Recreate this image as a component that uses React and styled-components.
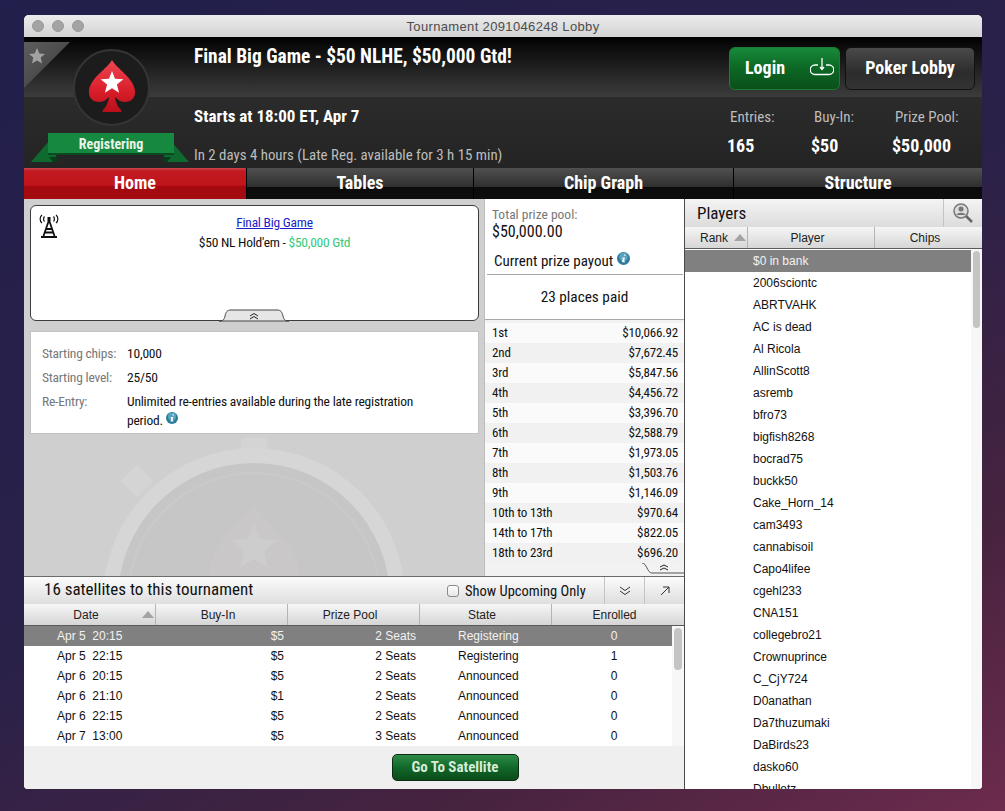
import React from 'react';
import styled, { createGlobalStyle } from 'styled-components';

const narrow = `"Liberation Sans Narrow", "Roboto Condensed", "DejaVu Sans Condensed", "Liberation Sans", sans-serif`;
const sans = `"Liberation Sans", Arial, sans-serif`;

const payouts = [
  ['1st', '$10,066.92'], ['2nd', '$7,672.45'], ['3rd', '$5,847.56'], ['4th', '$4,456.72'],
  ['5th', '$3,396.70'], ['6th', '$2,588.79'], ['7th', '$1,973.05'], ['8th', '$1,503.76'],
  ['9th', '$1,146.09'], ['10th to 13th', '$970.64'], ['14th to 17th', '$822.05'], ['18th to 23rd', '$696.20'],
];

const satellites = [
  ['Apr 5  20:15', '$5', '2 Seats', 'Registering', '0'],
  ['Apr 5  22:15', '$5', '2 Seats', 'Registering', '1'],
  ['Apr 6  20:15', '$5', '2 Seats', 'Announced', '0'],
  ['Apr 6  21:10', '$1', '2 Seats', 'Announced', '0'],
  ['Apr 6  22:15', '$5', '2 Seats', 'Announced', '0'],
  ['Apr 7  13:00', '$5', '3 Seats', 'Announced', '0'],
];

const players = ['$0 in bank', '2006sciontc', 'ABRTVAHK', 'AC is dead', 'Al Ricola', 'AllinScott8', 'asremb', 'bfro73',
  'bigfish8268', 'bocrad75', 'buckk50', 'Cake_Horn_14', 'cam3493', 'cannabisoil', 'Capo4lifee', 'cgehl233', 'CNA151',
  'collegebro21', 'Crownuprince', 'C_CjY724', 'D0anathan', 'Da7thuzumaki', 'DaBirds23', 'dasko60', 'Dbulletz'];

const GlobalStyle = createGlobalStyle`
  html, body { margin: 0; padding: 0; height: 100%; }
  body {
    height: 811px;
    overflow: hidden;
    background: linear-gradient(152deg, #221f4c 0%, #2a2149 50%, #46233f 78%, #6d2b4d 100%);
    font-family: ${sans};
  }
  * { box-sizing: border-box; }
`;

const Desktop = styled.div`
  padding: 15px 23px 22px 24px;
  height: 811px;
`;

const Window = styled.div`
  width: 958px;
  height: 774px;
  border-radius: 5px 5px 4px 4px;
  overflow: hidden;
  display: flex;
  flex-direction: column;
  background: #fff;
`;

const TitleBar = styled.div`
  height: 22px;
  flex: none;
  position: relative;
  display: flex;
  align-items: center;
  justify-content: center;
  background: linear-gradient(#ececec, #d3d3d3);
  color: #4c4c4c;
  font-size: 13px;
  letter-spacing: 0.35px;
`;

const Lights = styled.div`
  position: absolute;
  left: 8px;
  top: 5px;
  display: flex;
  gap: 8px;
`;

const Light = styled.span`
  width: 12px;
  height: 12px;
  border-radius: 50%;
  background: #a3a3a3;
  border: 1px solid #999;
`;

const Header = styled.div`
  height: 131px;
  flex: none;
  display: flex;
  color: #fff;
  font-family: ${narrow};
  background: linear-gradient(#000 0, #0a0a0a 8px, #3c3c3c 60px, #2b2b2b 60px, #242424 131px);
`;

const LogoCol = styled.div`
  width: 170px;
  flex: none;
  position: relative;
`;

const Corner = styled.div`
  position: absolute;
  left: 0;
  top: 5px;
  width: 46px;
  height: 46px;
  background: linear-gradient(135deg, #5d5d5d, #3a3a3a);
  clip-path: polygon(0 0, 100% 0, 0 100%);
`;

const CornerStar = styled.svg`
  position: absolute;
  left: 3px;
  top: 9px;
`;

const LogoRing = styled.div`
  position: absolute;
  left: 49px;
  top: 12px;
  width: 77px;
  height: 77px;
  border-radius: 50%;
  background: #1c1c1c;
  border: 2px solid #353535;
  display: flex;
  align-items: center;
  justify-content: center;
  padding-bottom: 3px;
`;

const Ribbon = styled.svg`
  position: absolute;
  left: 7px;
  top: 94px;
`;

const RibbonLabel = styled.div`
  position: absolute;
  left: 24px;
  top: 96px;
  width: 126px;
  text-align: center;
  color: #e8f5e8;
  font-size: 14px;
  font-weight: 700;
  line-height: 22px;
`;

const InfoCol = styled.div`
  flex: 1;
  display: flex;
  flex-direction: column;
`;

const TopRow = styled.div`
  height: 60px;
  display: flex;
  justify-content: space-between;
  padding: 10px 7px 0 0;
`;

const Title = styled.div`
  font-size: 19.4px;
  font-weight: 700;
  line-height: 20px;
`;

const Buttons = styled.div`
  display: flex;
  gap: 5px;
`;

const LoginButton = styled.div`
  width: 111px;
  height: 43px;
  border-radius: 6px;
  border: 1px solid #1b7a33;
  background: linear-gradient(#188a3a, #0c6a25 45%, #0a4f1a);
  display: flex;
  align-items: center;
  justify-content: space-between;
  padding: 0 5px 3px 15px;
  font-size: 18px;
  font-weight: 700;
`;

const LobbyButton = styled.div`
  width: 130px;
  height: 43px;
  border-radius: 6px;
  border: 1px solid #111;
  background: linear-gradient(#4a4a4a, #2c2c2c 60%, #333);
  display: flex;
  align-items: center;
  justify-content: center;
  padding-bottom: 3px;
  font-size: 18px;
  font-weight: 700;
`;

const BottomRow = styled.div`
  flex: 1;
  display: flex;
  justify-content: space-between;
`;

const Starts = styled.div`
  display: flex;
  flex-direction: column;
`;

const StartsAt = styled.div`
  font-size: 17px;
  font-weight: 700;
  line-height: 20px;
  margin-top: 9px;
`;

const Countdown = styled.div`
  font-size: 14.9px;
  line-height: 18px;
  margin-top: 20px;
  color: #bdbdbd;
`;

const Stats = styled.div`
  display: flex;
  padding-right: 25px;
`;

const Stat = styled.div`
  width: ${(p) => p.$w}px;
  display: flex;
  flex-direction: column;
  white-space: nowrap;
`;

const StatLabel = styled.div`
  font-size: 15px;
  line-height: 18px;
  margin-top: 11px;
  color: #bdbdbd;
`;

const StatValue = styled.div`
  font-size: 18px;
  font-weight: 700;
  line-height: 22px;
  margin-top: 9px;
  margin-left: -3px;
`;

const Tabs = styled.div`
  height: 31px;
  flex: none;
  display: flex;
`;

const Tab = styled.div`
  width: ${(p) => p.$w}px;
  color: #fff;
  font-family: ${narrow};
  font-size: 18px;
  font-weight: 700;
  text-align: center;
  line-height: 30px;
  border-left: ${(p) => (p.$first ? 'none' : '1px solid #000')};
  background: ${(p) =>
    p.$active
      ? 'linear-gradient(#c9474c 0, #c11a20 3px, #c1141b 55%, #a30a10 60%, #a50c12)'
      : 'linear-gradient(#505050, #2f2f2f 60%, #0b0b0b 60%, #0d0d0d)'};
`;

const Main = styled.div`
  flex: 1;
  min-height: 0;
  display: flex;
`;

const LeftSide = styled.div`
  width: 661px;
  flex: none;
  display: flex;
  flex-direction: column;
  border-right: 1px solid #4a4a4a;
`;

const Upper = styled.div`
  height: 377px;
  flex: none;
  display: flex;
`;

const HomePane = styled.div`
  width: 461px;
  flex: none;
  position: relative;
  overflow: hidden;
  padding: 6px 5px 6px 6px;
  display: flex;
  flex-direction: column;
  gap: 10px;
  background: #cfcfcf;
  border-right: 1px solid #bdbdbd;
`;

const Watermark = styled.svg`
  position: absolute;
  left: 0;
  top: 230px;
`;

const NewsCard = styled.div`
  height: 116px;
  flex: none;
  position: relative;
  border: 1px solid #3c3c3c;
  border-radius: 6px;
  background: #fff;
  padding: 7px 0 0 40px;
  text-align: center;
  font-family: ${narrow};
  font-size: 13.5px;
  letter-spacing: -0.25px;
  line-height: 19px;
  color: #111;
`;

const Tower = styled.svg`
  position: absolute;
  left: 8px;
  top: 8px;
`;

const NewsLink = styled.a`
  color: #1a1fc8;
  text-decoration: underline;
  display: block;
  margin-bottom: 1px;
`;

const Green = styled.span`
  color: #35c977;
`;

const CollapseTab = styled.svg`
  position: absolute;
  left: 188px;
  bottom: -2px;
`;

const InfoBox = styled.div`
  position: relative;
  height: 103px;
  flex: none;
  background: #fff;
  border: 1px solid #c2c2c2;
  padding: 12px 11px 0;
  display: grid;
  grid-template-columns: 85px 1fr;
  grid-auto-rows: min-content;
  row-gap: 5px;
  font-family: ${narrow};
  font-size: 13.5px;
  letter-spacing: -0.2px;
  line-height: 19px;
  color: #111;
`;

const InfoLabel = styled.div`
  color: #777;
`;

const InfoValue = styled.div`
  max-width: 310px;
`;

const InfoDot = styled.svg`
  vertical-align: 1px;
`;

const PrizePane = styled.div`
  flex: 1;
  position: relative;
  background: #fff;
  display: flex;
  flex-direction: column;
  font-family: ${narrow};
  color: #111;
`;

const PoolLabel = styled.div`
  font-size: 13.5px;
  line-height: 16px;
  color: #777;
  padding: 7px 0 0 7px;
`;

const PoolValue = styled.div`
  font-size: 16px;
  line-height: 20px;
  padding-left: 7px;
`;

const PayoutTitle = styled.div`
  font-size: 15px;
  line-height: 20px;
  height: 24px;
  margin: 9px 1px 0 2px;
  padding: 0 0 0 7px;
  border-bottom: 1px solid #a8a8a8;
`;

const Places = styled.div`
  height: 45px;
  flex: none;
  text-align: center;
  font-size: 15.3px;
  line-height: 44px;
  border-bottom: 1px solid #a8a8a8;
`;

const PayoutList = styled.div`
  flex: 1;
  padding-top: 3px;
  background: #f2f2f2;
`;

const PayoutRow = styled.div`
  height: 20px;
  display: flex;
  justify-content: space-between;
  padding: 0 6px 0 7px;
  font-size: 13px;
  letter-spacing: -0.15px;
  line-height: 20px;
  background: ${(p) => (p.$odd ? '#fafafa' : '#f1f1f1')};
`;

const PayoutHandle = styled.svg`
  position: absolute;
  right: 0;
  bottom: 2px;
`;

const Satellites = styled.div`
  flex: 1;
  min-height: 0;
  display: flex;
  flex-direction: column;
  border-top: 1px solid #6b6b6b;
`;

const SatBar = styled.div`
  height: 27px;
  flex: none;
  display: flex;
  align-items: center;
  background: linear-gradient(#fbfbfb, #dedede);
  font-family: ${narrow};
  color: #111;
`;

const SatTitle = styled.div`
  flex: 1;
  font-size: 17px;
  padding: 0 0 3px 20px;
`;

const UpcomingBox = styled.span`
  width: 12px;
  height: 12px;
  margin-right: 6px;
  border: 1px solid #8a8a8a;
  border-radius: 3px;
  background: linear-gradient(#fff, #e6e6e6);
`;

const UpcomingLabel = styled.div`
  font-size: 14.5px;
  width: 139px;
  padding-top: 2px;
  white-space: nowrap;
`;

const BarButton = styled.div`
  width: 40px;
  height: 27px;
  display: flex;
  align-items: center;
  justify-content: center;
  border-left: 1px solid #c4c4c4;
`;

const HeadRow = styled.div`
  height: ${(p) => p.$h}px;
  flex: none;
  display: grid;
  grid-template-columns: ${(p) => p.$cols};
  background: linear-gradient(#f6f6f6, #d6d6d6);
  border-bottom: 1px solid #5a5a5a;
`;

const HeadCell = styled.div`
  position: relative;
  font-size: 12px;
  color: #222;
  display: flex;
  align-items: center;
  justify-content: ${(p) => p.$align || 'center'};
  padding: 0 ${(p) => (p.$pad ? 0 : 7)}px 0 ${(p) => p.$pad || 0}px;
  border-right: ${(p) => (p.$last ? 'none' : '1px solid #b4b4b4')};
`;

const SortArrow = styled.span`
  position: absolute;
  right: 1px;
  top: 7px;
  width: 0;
  height: 0;
  border-left: 6px solid transparent;
  border-right: 6px solid transparent;
  border-bottom: 7px solid #a4a4a4;
`;

const SatBody = styled.div`
  height: 120px;
  flex: none;
  position: relative;
  overflow: hidden;
  background: #fff;
`;

const SatRow = styled.div`
  height: 20px;
  width: 648px;
  display: grid;
  grid-template-columns: 33px 120px 107px 132px 42px 98px 116px;
  align-items: center;
  font-size: 12px;
  color: ${(p) => (p.$sel ? '#f2f2f2' : '#111')};
  background: ${(p) => (p.$sel ? '#808080' : '#fff')};
`;

const Cell = styled.span`
  text-align: ${(p) => p.$a || 'left'};
  white-space: pre;
`;

const Track = styled.div`
  position: absolute;
  right: 0;
  top: 0;
  bottom: 0;
  width: ${(p) => p.$w}px;
  background: #f7f7f7;
`;

const Thumb = styled.div`
  position: absolute;
  left: 2px;
  right: 2px;
  top: 2px;
  height: ${(p) => p.$h}px;
  border-radius: 4px;
  background: #c4c4c4;
`;

const SatFooter = styled.div`
  flex: 1;
  display: flex;
  justify-content: center;
  align-items: center;
  padding-left: 202px;
  background: #efefef;
`;

const SatButton = styled.div`
  width: 127px;
  height: 27px;
  border-radius: 5px;
  border: 1px solid #0d2a14;
  background: linear-gradient(#2c8c47, #12692a 48%, #0a4c1a);
  color: #d8ecd8;
  font-family: ${narrow};
  font-size: 15px;
  font-weight: 700;
  text-align: center;
  line-height: 24px;
`;

const PlayersPane = styled.div`
  flex: 1;
  min-width: 0;
  display: flex;
  flex-direction: column;
  background: #fff;
`;

const PlayersBar = styled.div`
  height: 28px;
  flex: none;
  display: flex;
  align-items: center;
  justify-content: space-between;
  background: linear-gradient(#f4f4f4, #dcdcdc);
  font-family: ${narrow};
  font-size: 17px;
  color: #111;
  padding-left: 12px;
`;

const SearchButton = styled.div`
  width: 39px;
  height: 28px;
  display: flex;
  align-items: center;
  justify-content: center;
  border-left: 1px solid #c4c4c4;
`;

const PlayerList = styled.div`
  flex: 1;
  min-height: 0;
  position: relative;
  overflow: hidden;
  padding-top: 1px;
`;

const PlayerRow = styled.div`
  height: 22px;
  width: 286px;
  padding-left: 68px;
  font-size: 12px;
  line-height: 22px;
  color: ${(p) => (p.$sel ? '#f2f2f2' : '#111')};
  background: ${(p) => (p.$sel ? '#808080' : '#fff')};
`;

const Spade = () => (
  <svg width="46" height="52" viewBox="0 0 46 52">
    <defs>
      <linearGradient id="spadeFill" x1="0" y1="0" x2="0" y2="1">
        <stop offset="0" stopColor="#f04651" />
        <stop offset="0.6" stopColor="#d81e2a" />
        <stop offset="1" stopColor="#b80f1a" />
      </linearGradient>
    </defs>
    <path
      d="M23 0C19 8 1 18 0 31c-.6 8 5 11 10 11 4 0 7-2 10-5-.4 5-3 10-6 13l-.6 2h19.2l-.6-2c-3-3-5.6-8-6-13 3 3 6 5 10 5 5 0 10.600-3 10-11C45 18 27 8 23 0z"
      fill="url(#spadeFill)"
    />
    <path d="M23 11l3 7.800 8.400.5-6.500 5.300 2.200 8.100L23 28.200l-7.100 4.500 2.200-8.100-6.500-5.300 8.400-.5z" fill="#fff" />
  </svg>
);

const InfoIcon = ({ size = 12 }) => (
  <InfoDot width={size} height={size} viewBox="0 0 12 12">
    <circle cx="6" cy="6" r="6" fill="#2b7c9c" />
    <circle cx="6" cy="4.500" r="4" fill="#5ba4bf" />
    <path d="M6.600 2.300h1.200v1.200H6.600zM5 5h2.300l-.8 3.600h.9v.8H4.600l.8-3.600h-.7z" fill="#fff" />
  </InfoDot>
);

export default function App() {
  return (
    <>
      <GlobalStyle />
      <Desktop>
        <Window>
          <TitleBar>
            <Lights>
              <Light />
              <Light />
              <Light />
            </Lights>
            Tournament 2091046248 Lobby
          </TitleBar>
          <Header>
            <LogoCol>
              <Corner />
              <CornerStar width="20" height="20" viewBox="0 0 20 20">
                <path d="M10 2l2.400 5.400 5.600.5-4.300 3.700 1.300 5.800L10 14.400l-5 3 1.300-5.800L2 7.900l5.600-.5z" fill="#a2a2a2" />
              </CornerStar>
              <LogoRing>
                <Spade />
              </LogoRing>
              <Ribbon width="158" height="32" viewBox="0 0 158 32">
                <path d="M18 10L0 31h22l4-4z" fill="#0e6a2e" />
                <path d="M140 10l18 21h-22l-4-4z" fill="#0e6a2e" />
                <path d="M18 26h8v5h-4z M132 26h8l-4 5h-4z" fill="#083d1a" />
                <rect x="17" y="2" width="126" height="21" fill="#178840" />
                <rect x="17" y="22" width="126" height="2" fill="#0b4a20" />
              </Ribbon>
              <RibbonLabel>Registering</RibbonLabel>
            </LogoCol>
            <InfoCol>
              <TopRow>
                <Title>Final Big Game - $50 NLHE, $50,000 Gtd!</Title>
                <Buttons>
                  <LoginButton>
                    Login
                    <svg width="24" height="18" viewBox="0 0 24 18" fill="none" stroke="#fff" strokeWidth="1.300">
                      <path d="M8 7H5a4.500 4.500 0 0 0 0 9.500h14A4.500 4.500 0 0 0 19 7h-3" />
                      <path d="M12 0v11M10 9l2 2.500 2-2.500" />
                    </svg>
                  </LoginButton>
                  <LobbyButton>Poker Lobby</LobbyButton>
                </Buttons>
              </TopRow>
              <BottomRow>
                <Starts>
                  <StartsAt>Starts at 18:00 ET, Apr 7</StartsAt>
                  <Countdown>In 2 days 4 hours (Late Reg. available for 3 h 15 min)</Countdown>
                </Starts>
                <Stats>
                  <Stat $w={84}>
                    <StatLabel>Entries:</StatLabel>
                    <StatValue>165</StatValue>
                  </Stat>
                  <Stat $w={81}>
                    <StatLabel>Buy-In:</StatLabel>
                    <StatValue>$50</StatValue>
                  </Stat>
                  <Stat $w={62}>
                    <StatLabel>Prize Pool:</StatLabel>
                    <StatValue>$50,000</StatValue>
                  </Stat>
                </Stats>
              </BottomRow>
            </InfoCol>
          </Header>
          <Tabs>
            <Tab $first $active $w={222}>Home</Tab>
            <Tab $w={227}>Tables</Tab>
            <Tab $w={260}>Chip Graph</Tab>
            <Tab $w={249}>Structure</Tab>
          </Tabs>
          <Main>
            <LeftSide>
              <Upper>
                <HomePane>
                  <Watermark width="460" height="147" viewBox="0 0 460 147">
                    <rect x="217" y="9" width="26" height="14" rx="3" fill="#d4d4d4" />
                    <rect x="101" y="40" width="24" height="24" rx="3" fill="#d4d4d4" transform="rotate(-45 113 52)" />
                    <circle cx="230" cy="170" r="151" fill="#d6d6d6" />
                    <circle cx="230" cy="170" r="136" fill="#c6c6c6" />
                    <circle cx="230" cy="170" r="126" fill="none" stroke="#cacaca" strokeWidth="2" />
                    <path d="M230 74c-10 20-45 38-45 73h90c0-35-35-53-45-73z" fill="#c9c7c7" />
                    <path d="M230 94l6 16 17 1-13 11 4 17-14-9-14 9 4-17-13-11 17-1z" fill="#cdcdcd" />
                  </Watermark>
                  <NewsCard>
                    <Tower width="20" height="24" viewBox="0 0 20 24" fill="none" stroke="#111">
                      <path d="M3 1c-2.500 2-2.500 6 0 8M5.500 2.500c-1.200 1.200-1.200 3.800 0 5M17 1c2.500 2 2.500 6 0 8M14.500 2.500c1.200 1.200 1.200 3.800 0 5" strokeWidth="1.200" />
                      <rect x="8.500" y="3" width="3" height="4" fill="#111" stroke="none" />
                      <path d="M10 6L4.500 22M10 6l5.500 16M7 15h6M6 18.500h8M2 23h16" strokeWidth="1.800" />
                    </Tower>
                    <NewsLink>Final Big Game</NewsLink>
                    <div>
                      $50 NL Hold'em - <Green>$50,000 Gtd</Green>
                    </div>
                    <CollapseTab width="70" height="13" viewBox="0 0 70 13">
                      <path d="M0 12c4 0 5-1 6-5 1-4 2-6 6-6h46c4 0 5 2 6 6 1 4 2 5 6 5z" fill="#e6e6e6" stroke="#444" />
                      <path d="M31 7l4-2.500 4 2.500M31 10l4-2.500 4 2.500" fill="none" stroke="#222" />
                    </CollapseTab>
                  </NewsCard>
                  <InfoBox>
                    <InfoLabel>Starting chips:</InfoLabel>
                    <InfoValue>10,000</InfoValue>
                    <InfoLabel>Starting level:</InfoLabel>
                    <InfoValue>25/50</InfoValue>
                    <InfoLabel>Re-Entry:</InfoLabel>
                    <InfoValue>
                      Unlimited re-entries available during the late registration period. <InfoIcon />
                    </InfoValue>
                  </InfoBox>
                </HomePane>
                <PrizePane>
                  <PoolLabel>Total prize pool:</PoolLabel>
                  <PoolValue>$50,000.00</PoolValue>
                  <PayoutTitle>
                    Current prize payout <InfoIcon size={13} />
                  </PayoutTitle>
                  <Places>23 places paid</Places>
                  <PayoutList>
                    {payouts.map(([place, amount], i) => (
                      <PayoutRow key={place} $odd={i % 2 === 0}>
                        <span>{place}</span>
                        <span>{amount}</span>
                      </PayoutRow>
                    ))}
                  </PayoutList>
                  <PayoutHandle width="42" height="11" viewBox="0 0 42 11">
                    <path d="M0 0c5 0 5 10 10 10h32V0z" fill="#f2f2f2" />
                    <path d="M0 0c5 0 5 10 10 10h32" fill="none" stroke="#555" />
                    <path d="M18 4l4-2 4 2M18 7l4-2 4 2" fill="none" stroke="#222" />
                  </PayoutHandle>
                </PrizePane>
              </Upper>
              <Satellites>
                <SatBar>
                  <SatTitle>16 satellites to this tournament</SatTitle>
                  <UpcomingBox />
                  <UpcomingLabel>Show Upcoming Only</UpcomingLabel>
                  <BarButton>
                    <svg width="12" height="12" viewBox="0 0 12 12" fill="none" stroke="#333">
                      <path d="M1 2l5 3.500L11 2M1 6l5 3.500L11 6" />
                    </svg>
                  </BarButton>
                  <BarButton>
                    <svg width="12" height="12" viewBox="0 0 12 12" fill="none" stroke="#333">
                      <path d="M2 10l8-8M4 2h6v6" />
                    </svg>
                  </BarButton>
                </SatBar>
                <HeadRow $h={22} $cols="132px 132px 132px 132px 132px">
                  <HeadCell>
                    Date
                    <SortArrow />
                  </HeadCell>
                  <HeadCell>Buy-In</HeadCell>
                  <HeadCell>Prize Pool</HeadCell>
                  <HeadCell>State</HeadCell>
                  <HeadCell $last>Enrolled</HeadCell>
                </HeadRow>
                <SatBody>
                  {satellites.map((row, i) => (
                    <SatRow key={row[0]} $sel={i === 0}>
                      <span />
                      <Cell>{row[0]}</Cell>
                      <Cell $a="right">{row[1]}</Cell>
                      <Cell $a="right">{row[2]}</Cell>
                      <span />
                      <Cell>{row[3]}</Cell>
                      <Cell $a="center">{row[4]}</Cell>
                    </SatRow>
                  ))}
                  <Track $w={12}>
                    <Thumb $h={42} />
                  </Track>
                </SatBody>
                <SatFooter>
                  <SatButton>Go To Satellite</SatButton>
                </SatFooter>
              </Satellites>
            </LeftSide>
            <PlayersPane>
              <PlayersBar>
                Players
                <SearchButton>
                  <svg width="22" height="22" viewBox="0 0 22 22" fill="none">
                    <circle cx="9" cy="9" r="7" fill="#dcdcdc" stroke="#777" strokeWidth="1.500" />
                    <circle cx="9" cy="7" r="2.500" fill="#777" />
                    <path d="M4.500 13c1-3 8-3 9 0" fill="#777" />
                    <path d="M14 14l6 6" stroke="#666" strokeWidth="2.500" />
                  </svg>
                </SearchButton>
              </PlayersBar>
              <HeadRow $h={22} $cols="63px 127px 1fr">
                <HeadCell $align="flex-start" $pad={15}>
                  Rank
                  <SortArrow />
                </HeadCell>
                <HeadCell>Player</HeadCell>
                <HeadCell $last>Chips</HeadCell>
              </HeadRow>
              <PlayerList>
                {players.map((name, i) => (
                  <PlayerRow key={name} $sel={i === 0}>{name}</PlayerRow>
                ))}
                <Track $w={11}>
                  <Thumb $h={77} />
                </Track>
              </PlayerList>
            </PlayersPane>
          </Main>
        </Window>
      </Desktop>
    </>
  );
}
